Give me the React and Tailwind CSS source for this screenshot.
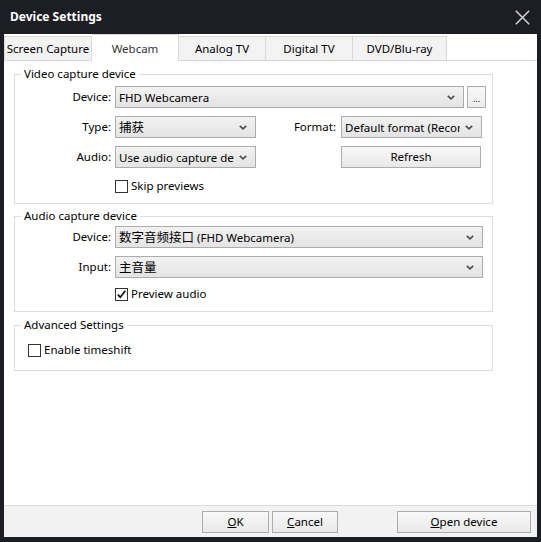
import React from "react";

function Chevron() {
  return (
    <svg width="8" height="5" viewBox="0 0 8 5" className="shrink-0">
      <path d="M0.8 0.8 L4 3.8 L7.2 0.8" fill="none" stroke="#505050" strokeWidth="1.7" />
    </svg>
  );
}

function Select({ w, children }) {
  return (
    <div className={`${w} h-[22px] flex items-center border border-[#acacac] bg-linear-to-b from-[#f2f2f2] to-[#e4e4e4] pl-[3px] pr-[8px] shrink-0`}>
      <span className="flex-1 min-w-0 mr-[5px] whitespace-nowrap overflow-hidden text-clip leading-[19px]">{children}</span>
      <Chevron />
    </div>
  );
}

function Check({ checked }) {
  return (
    <div className="w-[13px] h-[13px] border border-[#333] bg-white flex items-center justify-center shrink-0">
      {checked && (
        <svg width="11" height="11" viewBox="0 0 11 11">
          <path d="M1.8 5.6 L4.3 8.2 L9.3 1.8" fill="none" stroke="#111" strokeWidth="1.8" />
        </svg>
      )}
    </div>
  );
}

function Btn({ w, children, extra = "" }) {
  return (
    <div className={`${w} h-[22px] flex items-center justify-center border border-[#adadad] bg-linear-to-b from-[#f8f8f8] to-[#e9e9e9] shrink-0 ${extra}`}>
      {children}
    </div>
  );
}

const CJK = "font-['Noto_Sans_CJK_SC','Noto_Sans',sans-serif] text-[12.5px]";

export default function App() {
  return (
    <div className="w-[541px] h-[542px] bg-[#1d1d24] flex flex-col font-['Noto_Sans','Noto_Sans_CJK_SC',sans-serif] text-[11.5px] text-black leading-[16px]">
      {/* Title bar */}
      <div className="h-[34px] flex items-center justify-between pl-[10px] pr-[11px] shrink-0">
        <span className="text-white font-bold text-[12px]">Device Settings</span>
        <svg width="15" height="15" viewBox="0 0 15 15">
          <path d="M0.8 0.8 L14.2 14.2 M14.2 0.8 L0.8 14.2" stroke="#d0d0d0" strokeWidth="1.6" />
        </svg>
      </div>

      {/* Body */}
      <div className="flex-1 mx-[4px] mb-[5px] bg-white flex flex-col">
        {/* Tabs */}
        <div className="h-[27px] flex items-end shrink-0">
          <div className="w-[88px] h-[25px] border border-[#d9d9d9] bg-[#f3f3f3] flex items-center justify-center whitespace-nowrap">Screen Capture</div>
          <div className="w-[87px] h-[27px] border-t border-r border-[#d9d9d9] bg-white flex items-center justify-center pt-[2px] text-[#333]">Webcam</div>
          <div className="w-[87px] h-[25px] border-t border-r border-b border-[#d9d9d9] bg-[#f3f3f3] flex items-center justify-center">Analog TV</div>
          <div className="w-[87px] h-[25px] border-t border-r border-b border-[#d9d9d9] bg-[#f3f3f3] flex items-center justify-center">Digital TV</div>
          <div className="w-[94px] h-[25px] border-t border-r border-b border-[#d9d9d9] bg-[#f3f3f3] flex items-center justify-center">DVD/Blu-ray</div>
          <div className="flex-1 h-[25px] border-b border-[#d9d9d9]" />
        </div>

        {/* Video capture device */}
        <fieldset className="mt-[5px] ml-[10px] w-[479px] border border-[#dcdcdc]">
          <legend className="ml-[6px] px-[3px] leading-[16px]">Video capture device</legend>
          <div className="pt-[4px] pb-[9px] flex flex-col">
            <div className="flex items-center">
              <span className="w-[100px] text-right pr-[4px]">Device:</span>
              <Select w="w-[349px]">FHD Webcamera</Select>
              <div className="ml-[3px] w-[19px] h-[22px] border border-[#adadad] bg-linear-to-b from-[#f8f8f8] to-[#ececec] flex items-end justify-center pb-[4px] text-[9px] leading-[9px]">...</div>
            </div>
            <div className="flex items-center mt-[8px]">
              <span className="w-[100px] text-right pr-[4px]">Type:</span>
              <Select w="w-[141px]"><span className={CJK}>捕获</span></Select>
              <span className="w-[85px] text-right pr-[5px]">Format:</span>
              <Select w="w-[141px]">Default format (Recommended)</Select>
            </div>
            <div className="flex items-center mt-[8px]">
              <span className="w-[100px] text-right pr-[4px]">Audio:</span>
              <Select w="w-[141px]">Use audio capture device</Select>
              <span className="w-[85px]" />
              <Btn w="w-[140px]">Refresh</Btn>
            </div>
            <div className="flex items-center mt-[10px] h-[16px] pl-[100px]">
              <Check />
              <span className="ml-[3px]">Skip previews</span>
            </div>
          </div>
        </fieldset>

        {/* Audio capture device */}
        <fieldset className="mt-[4px] ml-[10px] w-[479px] border border-[#dcdcdc]">
          <legend className="ml-[6px] px-[3px] leading-[16px]">Audio capture device</legend>
          <div className="pt-[2px] pb-[9px] flex flex-col">
            <div className="flex items-center">
              <span className="w-[100px] text-right pr-[4px]">Device:</span>
              <Select w="w-[368px]"><span className={CJK}>数字音频接口</span> (FHD Webcamera)</Select>
            </div>
            <div className="flex items-center mt-[8px]">
              <span className="w-[100px] text-right pr-[4px]">Input:</span>
              <Select w="w-[368px]"><span className={CJK}>主音量</span></Select>
            </div>
            <div className="flex items-center mt-[8px] h-[16px] pl-[100px]">
              <Check checked />
              <span className="ml-[3px]">Preview audio</span>
            </div>
          </div>
        </fieldset>

        {/* Advanced */}
        <fieldset className="mt-[5px] ml-[10px] w-[479px] border border-[#dcdcdc]">
          <legend className="ml-[6px] px-[3px] leading-[16px]">Advanced Settings</legend>
          <div className="pt-[9px] pb-[12px] flex flex-col">
            <div className="flex items-center h-[16px] pl-[13px]">
              <Check />
              <span className="ml-[3px]">Enable timeshift</span>
            </div>
          </div>
        </fieldset>

        <div className="flex-1" />

        {/* Footer */}
        <div className="h-[32px] border-t border-[#dcdcdc] bg-[#f2f2f2] flex items-start pt-[5px] shrink-0">
          <Btn w="w-[67px]" extra="ml-[198px]"><span><u>O</u>K</span></Btn>
          <Btn w="w-[66px]" extra="ml-[3px]"><span><u>C</u>ancel</span></Btn>
          <Btn w="w-[134px]" extra="ml-[59px]"><span><u>O</u>pen device</span></Btn>
        </div>
      </div>
    </div>
  );
}
